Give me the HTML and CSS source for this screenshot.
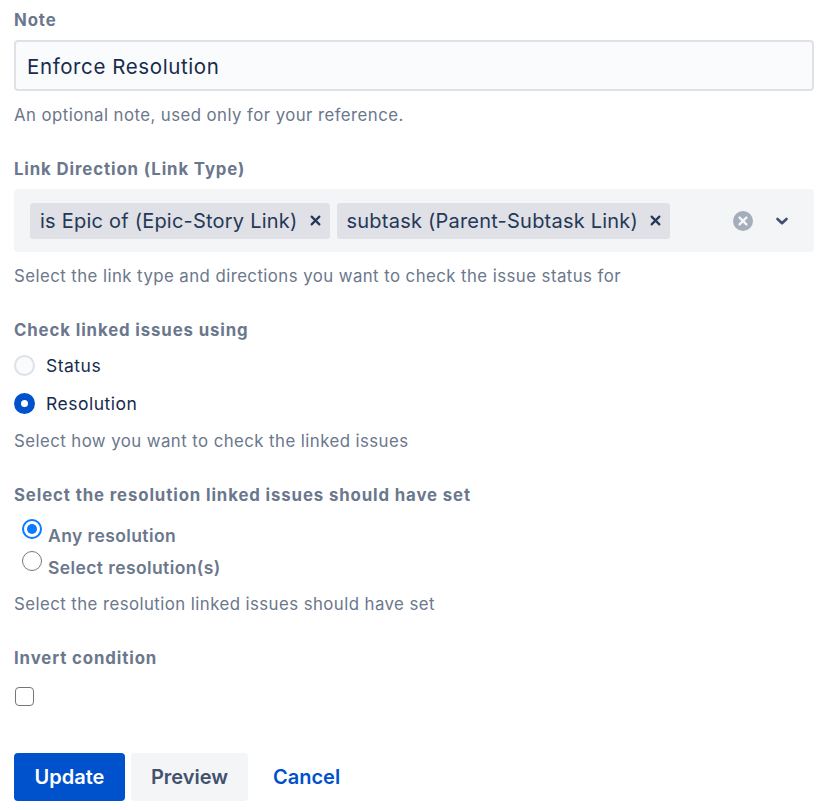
FILE: index.html
```html
<!DOCTYPE html>
<html lang="en">
<head>
<meta charset="utf-8">
<title>Enforce Resolution</title>
<link rel="stylesheet" href="styles.css">
</head>
<body>
<form class="form">
  <div class="field">
    <label class="label">Note</label>
    <div class="text-input">Enforce Resolution</div>
    <div class="help">An optional note, used only for your reference.</div>
  </div>

  <div class="field">
    <label class="label">Link Direction (Link Type)</label>
    <div class="select">
      <div class="tags">
        <span class="tag">is Epic of (Epic-Story Link)
          <svg class="tag-x" viewBox="0 0 10 10" width="11" height="11"><path d="M1.5 1.5 L8.5 8.5 M8.5 1.5 L1.5 8.5" stroke="#253858" stroke-width="2" stroke-linecap="round"/></svg>
        </span>
        <span class="tag">subtask (Parent-Subtask Link)
          <svg class="tag-x" viewBox="0 0 10 10" width="11" height="11"><path d="M1.5 1.5 L8.5 8.5 M8.5 1.5 L1.5 8.5" stroke="#253858" stroke-width="2" stroke-linecap="round"/></svg>
        </span>
      </div>
      <div class="indicators">
        <svg class="clear" viewBox="0 0 20 20" width="20" height="20"><circle cx="10" cy="10" r="10" fill="#a5adba"/><path d="M6.6 6.6 L13.4 13.4 M13.4 6.6 L6.6 13.4" stroke="#f4f5f7" stroke-width="2.4" stroke-linecap="round"/></svg>
        <svg class="chevron" viewBox="0 0 14 10" width="14" height="10"><path d="M2.5 3 L7 7.2 L11.5 3" fill="none" stroke="#42526e" stroke-width="2.6" stroke-linecap="round" stroke-linejoin="round"/></svg>
      </div>
    </div>
    <div class="help">Select the link type and directions you want to check the issue status for</div>
  </div>

  <div class="field">
    <label class="label">Check linked issues using</label>
    <div class="radios">
      <div class="radio-row"><span class="ak-radio"></span><span class="radio-text">Status</span></div>
      <div class="radio-row"><span class="ak-radio checked"></span><span class="radio-text">Resolution</span></div>
    </div>
    <div class="help help-tight">Select how you want to check the linked issues</div>
  </div>

  <div class="field">
    <label class="label">Select the resolution linked issues should have set</label>
    <div class="native-radios">
      <div class="native-row"><span class="n-radio checked"></span><span class="native-text">Any resolution</span></div>
      <div class="native-row"><span class="n-radio"></span><span class="native-text">Select resolution(s)</span></div>
    </div>
    <div class="help help-native">Select the resolution linked issues should have set</div>
  </div>

  <div class="field field-last">
    <label class="label">Invert condition</label>
    <div class="check-row"><span class="n-check"></span></div>
  </div>

  <div class="buttons">
    <button type="button" class="btn btn-primary">Update</button>
    <button type="button" class="btn btn-default">Preview</button>
    <button type="button" class="btn btn-link">Cancel</button>
  </div>
</form>
</body>
</html>
```

FILE: styles.css
```css
* { box-sizing: border-box; }

html, body {
  margin: 0;
  padding: 0;
  background: #ffffff;
}

body {
  font-family: Inter, "Noto Sans", "Liberation Sans", sans-serif;
  color: #172b4d;
  font-size: 17px;
}

.form {
  width: 800px;
  margin-left: 14px;
  padding-top: 10px;
  display: flex;
  flex-direction: column;
}

.field {
  display: flex;
  flex-direction: column;
  margin-bottom: 34px;
}

.label {
  display: block;
  font-size: 16.8px;
  font-weight: 700;
  line-height: 20px;
  letter-spacing: 0.88px;
  color: #6b778c;
  margin-bottom: 10px;
}

.text-input {
  height: 51px;
  border: 2px solid #dfe1e6;
  border-radius: 4px;
  background: #fafbfc;
  font-size: 20.5px;
  letter-spacing: 0.6px;
  line-height: 47px;
  padding-left: 11px;
  padding-top: 1px;
  color: #172b4d;
}

.help {
  font-size: 16.8px;
  line-height: 20px;
  letter-spacing: 0.44px;
  color: #6b778c;
  margin-top: 14px;
}

.select {
  height: 63px;
  background: #f4f5f7;
  border-radius: 4px;
  display: flex;
  align-items: center;
  justify-content: space-between;
  padding: 0 25px 0 16px;
}

.tags {
  display: flex;
  gap: 7px;
}

.tag {
  height: 36px;
  background: #dfe1e6;
  border-radius: 3px;
  display: inline-flex;
  align-items: center;
  padding: 0 9px 0 10px;
  font-size: 20px;
  letter-spacing: 0.22px;
  color: #253858;
  gap: 12px;
}

.tag-x { display: block; }

.indicators {
  display: flex;
  align-items: center;
  gap: 22px;
}

.clear, .chevron { display: block; }

.radios {
  display: flex;
  flex-direction: column;
  gap: 17px;
  padding-top: 5px;
}

.radio-row {
  display: flex;
  align-items: center;
  height: 21px;
  gap: 11px;
}

.ak-radio {
  width: 21px;
  height: 21px;
  border-radius: 50%;
  border: 2px solid #dfe1e6;
  background: #fafbfc;
  flex: none;
}

.ak-radio.checked {
  border: none;
  background: #0052cc;
  position: relative;
}

.ak-radio.checked::after {
  content: "";
  position: absolute;
  left: 7px;
  top: 7px;
  width: 7px;
  height: 7px;
  border-radius: 50%;
  background: #ffffff;
}

.radio-text {
  font-size: 17.5px;
  letter-spacing: 0.5px;
  line-height: 21px;
  color: #172b4d;
}

.help-tight { margin-top: 17px; }

.native-radios {
  display: flex;
  flex-direction: column;
  gap: 11px;
  padding-left: 8px;
  padding-top: 9px;
}

.native-row {
  display: flex;
  align-items: flex-start;
  height: 21px;
  gap: 6px;
}

.n-radio {
  width: 20px;
  height: 20px;
  border-radius: 50%;
  border: 1.5px solid #7a7a7a;
  background: #ffffff;
  flex: none;
  margin-top: -5px;
  position: relative;
}

.n-radio.checked {
  border: 2.5px solid #0a7aff;
}

.n-radio.checked::after {
  content: "";
  position: absolute;
  left: 2.5px;
  top: 2.5px;
  width: 10px;
  height: 10px;
  border-radius: 50%;
  background: #0a7aff;
}

.native-text {
  font-size: 17.5px;
  font-weight: 600;
  letter-spacing: 0.4px;
  line-height: 21px;
  color: #6b778c;
  padding-top: 1px;
}

.help-native { margin-top: 17px; }

.field-last { margin-bottom: 33px; }

.check-row {
  padding-top: 9px;
  padding-left: 1px;
  height: 29px;
}

.n-check {
  display: block;
  width: 19px;
  height: 19px;
  border: 1.5px solid #767676;
  border-radius: 4px;
  background: #ffffff;
}

.buttons {
  display: flex;
  align-items: center;
  gap: 6px;
  margin-top: 13px;
}

.btn {
  height: 48px;
  border: none;
  border-radius: 4px;
  font-family: Inter, "Noto Sans", "Liberation Sans", sans-serif;
  font-size: 20px;
  font-weight: 600;
  padding: 0 19px;
  cursor: pointer;
}

.btn-primary {
  background: #0052cc;
  color: #ffffff;
  width: 111px;
}

.btn-default {
  background: #f4f5f7;
  color: #42526e;
  width: 117px;
}

.btn-link {
  background: transparent;
  color: #0052cc;
  padding: 0 19px;
}
```
